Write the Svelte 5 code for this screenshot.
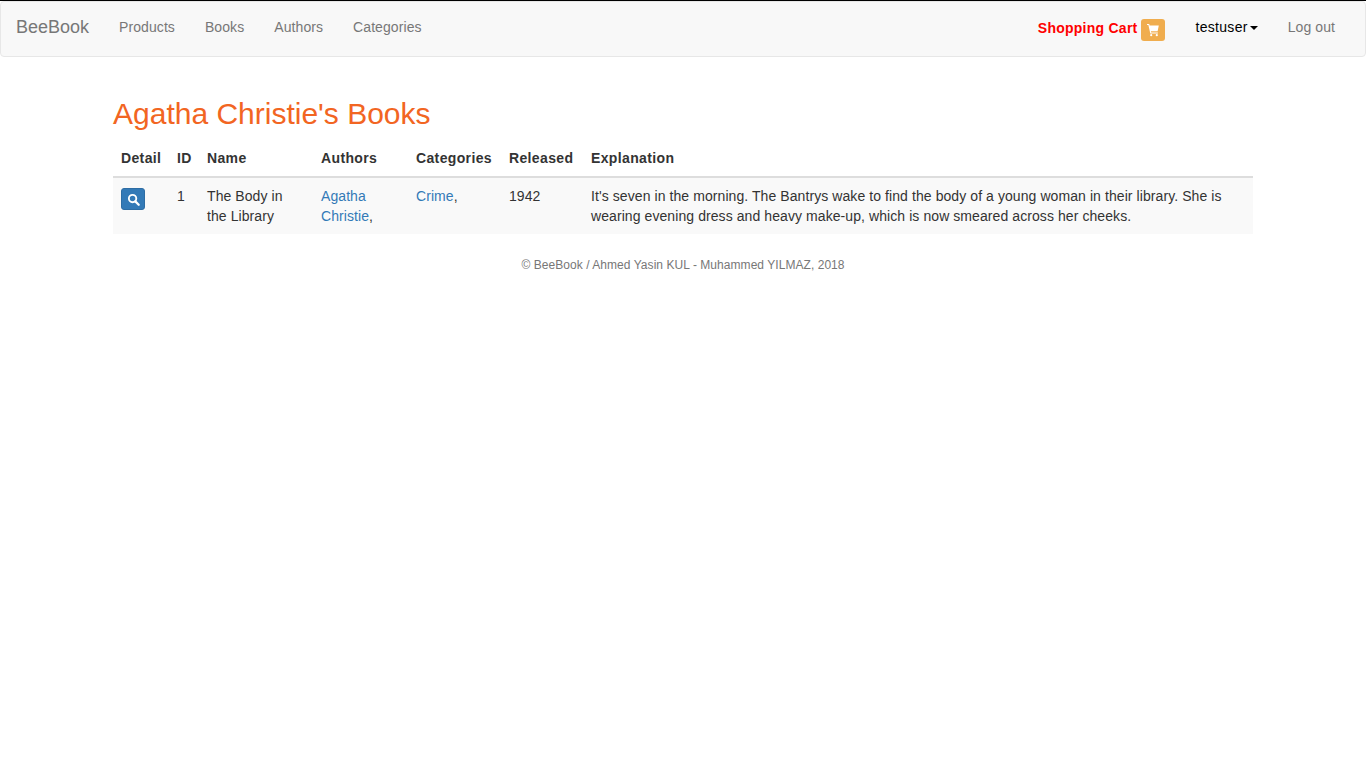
<script>
    let links = ["Products", "Books", "Authors", "Categories"]
</script>

<div class="topline"></div>
<nav class="navbar">
    <a class="brand" href="#top">BeeBook</a>
    <ul class="nav">
        {#each links as link}
            <li><a href="#top">{link}</a></li>
        {/each}
    </ul>
    <ul class="nav right">
        <li class="cart">
            <a href="#top">Shopping Cart</a>
            <span class="cartbtn">
                <svg width="14" height="14" viewBox="0 0 14 14">
                    <path d="M1 1h2.2l.4 1.6h9.2l-1.2 5.6H4.9l.3 1.2h6.7v1H4.3L2.4 2H1z" fill="#fff"/>
                    <circle cx="5.2" cy="12.2" r="1.1" fill="#fff"/>
                    <circle cx="10.8" cy="12.2" r="1.1" fill="#fff"/>
                </svg>
            </span>
        </li>
        <li><a class="user" href="#top">testuser<span class="caret"></span></a></li>
        <li><a href="#top">Log out</a></li>
    </ul>
</nav>

<div class="container">
    <h1>Agatha Christie's Books</h1>
    <table>
        <colgroup>
            <col class="c1">
            <col class="c2">
            <col class="c3">
            <col class="c4">
            <col class="c5">
            <col class="c6">
            <col>
        </colgroup>
        <thead>
            <tr>
                <th>Detail</th>
                <th>ID</th>
                <th>Name</th>
                <th>Authors</th>
                <th>Categories</th>
                <th>Released</th>
                <th>Explanation</th>
            </tr>
        </thead>
        <tbody>
            <tr>
                <td>
                    <span class="detailbtn">
                        <svg width="13" height="13" viewBox="0 0 14 14">
                            <circle cx="6" cy="6" r="4" fill="none" stroke="#fff" stroke-width="2"/>
                            <path d="M9 9L12.6 12.6" stroke="#fff" stroke-width="2.4" stroke-linecap="round"/>
                        </svg>
                    </span>
                </td>
                <td>1</td>
                <td>The Body in the Library</td>
                <td><a href="#top">Agatha Christie</a>,</td>
                <td><a href="#top">Crime</a>,</td>
                <td>1942</td>
                <td>It's seven in the morning. The Bantrys wake to find the body of a young woman in their library. She is wearing evening dress and heavy make-up, which is now smeared across her cheeks.</td>
            </tr>
        </tbody>
    </table>
    <footer>© BeeBook / Ahmed Yasin KUL - Muhammed YILMAZ, 2018</footer>
</div>

<style>
    :global(body) {
        font-family: "Liberation Sans", Arial, sans-serif;
        font-size: 14px;
        line-height: 20px;
        color: #333;
        background: #fff;
    }

    .topline {
        height: 1px;
        background: #000;
    }

    .navbar {
        display: flex;
        height: 54px;
        padding: 0 15px;
        background: #f8f8f8;
        border: 1px solid #e7e7e7;
        border-radius: 4px;
    }

    .navbar a {
        text-decoration: none;
        color: #777;
    }

    .brand {
        font-size: 18px;
        padding: 15px 15px 15px 0;
    }

    .nav {
        display: flex;
        list-style: none;
        margin: 0;
        padding: 0;
    }

    .nav li a {
        display: block;
        padding: 15px;
        letter-spacing: 0.08px;
    }

    .right {
        margin-left: auto;
    }

    .nav .cart {
        display: flex;
        align-items: flex-start;
        margin-right: 16px;
    }

    .nav li.cart a {
        padding: 16px 3px 0 0;
        color: #f00;
        font-weight: bold;
        letter-spacing: 0.25px;
    }

    .cartbtn {
        display: flex;
        align-items: center;
        justify-content: center;
        width: 24px;
        height: 22px;
        margin-top: 17px;
        background: #f0ad4e;
        border-radius: 3px;
    }

    .nav li .user {
        color: #000;
        letter-spacing: 0.3px;
    }

    .caret {
        display: inline-block;
        margin-left: 2px;
        vertical-align: middle;
        border-top: 4px solid #000;
        border-left: 4px solid transparent;
        border-right: 4px solid transparent;
    }

    .container {
        width: 1140px;
        margin: 0 auto;
    }

    h1 {
        margin: 40px 0 10px;
        font-size: 30px;
        font-weight: 500;
        line-height: 33px;
        color: #f26522;
    }

    table {
        width: 100%;
        table-layout: fixed;
        border-collapse: collapse;
    }

    .c1 { width: 56px; }
    .c2 { width: 30px; }
    .c3 { width: 114px; }
    .c4 { width: 95px; }
    .c5 { width: 93px; }
    .c6 { width: 82px; }

    th {
        padding: 8px;
        text-align: left;
        vertical-align: bottom;
        border-bottom: 2px solid #ddd;
        letter-spacing: 0.36px;
    }

    td {
        padding: 8px;
        vertical-align: top;
        background: #f9f9f9;
        letter-spacing: 0.08px;
    }

    td a {
        color: #337ab7;
        text-decoration: none;
    }

    .detailbtn {
        display: flex;
        align-items: center;
        justify-content: center;
        width: 24px;
        height: 22px;
        margin-top: 2px;
        background: #337ab7;
        border: 1px solid #2e6da4;
        border-radius: 3px;
        box-sizing: border-box;
    }

    footer {
        margin-top: 21px;
        text-align: center;
        font-size: 12px;
        letter-spacing: 0.05px;
        color: #777;
    }
</style>
